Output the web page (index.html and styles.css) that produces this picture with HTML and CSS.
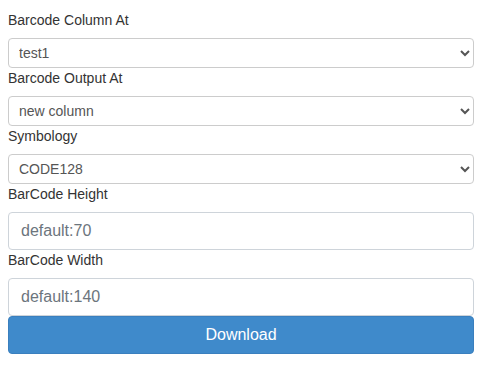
FILE: index.html
```html
<!DOCTYPE html>
<html lang="en">
<head>
    <meta charset="UTF-8">
    <title>Barcode</title>
    <link rel="stylesheet" href="styles.css">
</head>
<body>
    <div class="form">
        <label class="lbl">Barcode Column At</label>
        <select class="sel">
            <option>test1</option>
        </select>
        <label class="lbl">Barcode Output At</label>
        <select class="sel">
            <option>new column</option>
        </select>
        <label class="lbl">Symbology</label>
        <select class="sel">
            <option>CODE128</option>
        </select>
        <label class="lbl">BarCode Height</label>
        <input type="text" class="inp" placeholder="default:70">
        <label class="lbl">BarCode Width</label>
        <input type="text" class="inp" placeholder="default:140">
        <button class="btn">Download</button>
    </div>
</body>
</html>
```

FILE: styles.css
```css
* {
    box-sizing: border-box;
}

body, html {
    margin: 0;
    padding: 0;
    font-family: "Liberation Sans", Arial, sans-serif;
    background: #fff;
}

.form {
    display: flex;
    flex-direction: column;
    padding: 10px 16px 0 8px;
}

.lbl {
    font-size: 14px;
    line-height: 20px;
    color: #333;
    margin-bottom: 8px;
}

.sel {
    height: 30px;
    font-size: 14px;
    font-family: inherit;
    color: #555;
    padding: 0 6px;
    border: 1px solid #ccc;
    border-radius: 4px;
    background: #fff;
}

.inp {
    height: 38px;
    font-size: 16px;
    font-family: inherit;
    color: #495057;
    padding: 0 12px;
    border: 1px solid #ced4da;
    border-radius: 4px;
    outline: none;
}

.inp::placeholder {
    color: #6c757d;
}

.btn {
    height: 38px;
    font-size: 16px;
    font-family: inherit;
    color: #fff;
    background: #3f8acb;
    border: 1px solid #3a7fbe;
    border-radius: 4px;
    cursor: pointer;
}
```
